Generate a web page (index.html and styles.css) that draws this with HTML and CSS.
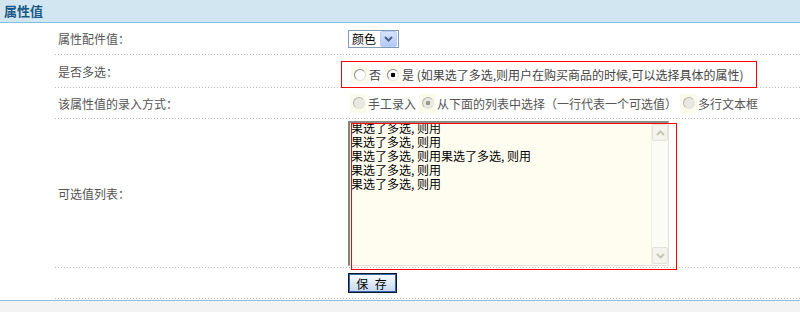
FILE: index.html
```html
<!DOCTYPE html>
<html>
<head>
    <meta charset="UTF-8">
    <title>属性值</title>
    <link rel="stylesheet" href="styles.css">
</head>
<body>
    <div class="panel">
        <div class="panel-head">属性值</div>
        <div class="form">
            <div class="row row1">
                <div class="label">属性配件值：</div>
                <div class="value">
                    <div class="select">
                        <span class="select-text">颜色</span>
                        <span class="select-btn">
                            <svg width="9" height="6" viewBox="0 0 9 6"><path d="M1 1 L4.5 4.5 L8 1" fill="none" stroke="#4d6185" stroke-width="2"/></svg>
                        </span>
                    </div>
                </div>
            </div>
            <div class="row row2">
                <div class="label">是否多选：</div>
                <div class="value value-top">
                    <div class="mark-box">
                        <label class="opt"><span class="rd"><input type="radio" name="multi"></span>否</label>
                        <label class="opt"><span class="rd"><input type="radio" name="multi" checked></span>是 (如果选了多选,则用户在购买商品的时候,可以选择具体的属性)</label>
                    </div>
                </div>
            </div>
            <div class="row row3">
                <div class="label">该属性值的录入方式：</div>
                <div class="value">
                    <div class="opts">
                        <label class="opt gray"><span class="rd"><input type="radio" name="mode" disabled></span>手工录入</label>
                        <label class="opt gray"><span class="rd"><input type="radio" name="mode" checked disabled></span>从下面的列表中选择（一行代表一个可选值）</label>
                        <label class="opt gray"><span class="rd"><input type="radio" name="mode" disabled></span>多行文本框</label>
                    </div>
                </div>
            </div>
            <div class="row row4">
                <div class="label">可选值列表：</div>
                <div class="value value-top">
                    <div class="ta-wrap">
                        <div class="ta-box">
                            <textarea class="ta">果选了多选, 则用
果选了多选, 则用
果选了多选, 则用果选了多选, 则用
果选了多选, 则用
果选了多选, 则用</textarea>
                            <div class="sbar">
                                <span class="sbtn">
                                    <svg width="9" height="6" viewBox="0 0 9 6"><path d="M1 5 L4.5 1.5 L8 5" fill="none" stroke="#c6c6b8" stroke-width="2"/></svg>
                                </span>
                                <span class="sbtn">
                                    <svg width="9" height="6" viewBox="0 0 9 6"><path d="M1 1 L4.5 4.5 L8 1" fill="none" stroke="#c6c6b8" stroke-width="2"/></svg>
                                </span>
                            </div>
                        </div>
                        <div class="ta-mark"></div>
                    </div>
                </div>
            </div>
            <div class="row row5">
                <div class="label"></div>
                <div class="value">
                    <button class="save">保 存</button>
                </div>
            </div>
        </div>
        <div class="foot"></div>
    </div>
</body>
</html>
```

FILE: styles.css
```css
body {
    margin: 0;
    background: #fff;
    font-family: "Noto Sans CJK SC", "Noto Sans", sans-serif;
    font-size: 12px;
    color: #555;
}
.panel-head {
    height: 22px;
    line-height: 22px;
    padding-left: 4px;
    background: #d1e6f1;
    border-bottom: 1px solid #80c0e2;
    color: #1a5886;
    font-size: 13px;
    font-weight: bold;
}
.form {
    margin-left: 55px;
}
.row {
    display: flex;
    box-sizing: border-box;
    padding-bottom: 1px;
    background-image: linear-gradient(to right, #bdbdbd 1px, transparent 1px);
    background-size: 3px 1px;
    background-repeat: repeat-x;
    background-position: left bottom;
}
.row1 { height: 32px; }
.row2 { height: 33px; }
.row3 { height: 31px; }
.row4 { height: 149px; }
.row5 { height: 31px; }
.label {
    width: 293px;
    flex: none;
    box-sizing: border-box;
    padding-left: 3px;
    display: flex;
    align-items: center;
    color: #555;
}
.value {
    flex: 1;
    display: flex;
    align-items: center;
}
.value-top {
    align-items: flex-start;
}

/* select */
.select {
    display: flex;
    align-items: center;
    box-sizing: border-box;
    width: 51px;
    height: 18px;
    border: 1px solid #7f9db9;
    background: #fff;
    color: #000;
}
.select-text {
    flex: 1;
    padding-left: 3px;
    line-height: 16px;
}
.select-btn {
    width: 15px;
    height: 14px;
    margin-right: 1px;
    display: flex;
    align-items: center;
    justify-content: center;
    border: 1px solid #bccdf5;
    border-radius: 2px;
    background: linear-gradient(#d6e2fc, #b5c9f6);
}

/* radios */
.mark-box {
    display: flex;
    align-items: center;
    box-sizing: border-box;
    width: 416px;
    height: 27px;
    margin-top: 6px;
    margin-left: -7px;
    padding-left: 9px;
    border: 1px solid #ff0000;
}
.opts {
    display: flex;
    align-items: center;
    padding-left: 2px;
}
.opt {
    display: flex;
    align-items: center;
    margin-right: 3px;
    color: #444;
    white-space: nowrap;
}
.opt.gray {
    color: #555;
}
.rd {
    display: flex;
    align-items: center;
    justify-content: center;
    width: 17px;
    height: 19px;
    margin-right: 1px;
    background: #fbfbec;
}
.rd input {
    -webkit-appearance: none;
    appearance: none;
    margin: 0;
    width: 12px;
    height: 12px;
    border-radius: 50%;
    border: 1px solid;
    border-color: #8a8a8a #dadada #e2e2e2 #8a8a8a;
    background: #fff;
}
.rd input:checked {
    background: radial-gradient(circle, #000 0 2px, #fff 2.6px);
}
.rd input:disabled {
    border-color: #b4b4ac #e2e2da #e2e2da #b4b4ac;
    background: #e9e9e1;
}
.rd input:disabled:checked {
    background: radial-gradient(circle, #9a9a94 0 2px, #e9e9e1 2.6px);
}

/* textarea */
.ta-wrap {
    position: relative;
    margin-top: 2px;
}
.ta-box {
    display: flex;
    box-sizing: border-box;
    width: 321px;
    height: 145px;
    border-style: solid;
    border-width: 2px 1px 1px 2px;
    border-color: #8c8c84 #e4e2d8 #e4e2d8 #84847c;
    background: #fffdf0;
    overflow: hidden;
}
.ta {
    flex: 1;
    margin: -2px 0 0 0;
    padding: 0 0 0 1px;
    border: none;
    outline: none;
    resize: none;
    overflow: hidden;
    background: transparent;
    font-family: "Noto Sans CJK SC", "Noto Sans", sans-serif;
    font-size: 12px;
    line-height: 14px;
    color: #000;
}
.sbar {
    width: 16px;
    flex: none;
    display: flex;
    flex-direction: column;
    justify-content: space-between;
    padding: 1px 0;
    background: #fcfcf6;
    border-left: 1px solid #f0efe6;
}
.sbtn {
    height: 15px;
    display: flex;
    align-items: center;
    justify-content: center;
    border: 1px solid #e6e4da;
    border-radius: 2px;
    background: #f4f3ec;
}
.ta-mark {
    position: absolute;
    left: 3px;
    top: 2px;
    width: 326px;
    height: 147px;
    box-sizing: border-box;
    border: 1px solid #ff0000;
    pointer-events: none;
}

/* save */
.save {
    width: 49px;
    height: 20px;
    padding: 0;
    border: 1px solid #0c1830;
    box-shadow: inset 0 0 0 1px #3d64a8;
    background: linear-gradient(#fbfdff, #c3d7f2);
    font-family: "Noto Sans CJK SC", "Noto Sans", sans-serif;
    font-size: 12px;
    letter-spacing: 2px;
    color: #000;
    cursor: pointer;
}

.foot {
    margin-top: 1px;
    height: 12px;
    border-top: 1px solid #8dc2dd;
    background: #f3f3f3;
}
```
